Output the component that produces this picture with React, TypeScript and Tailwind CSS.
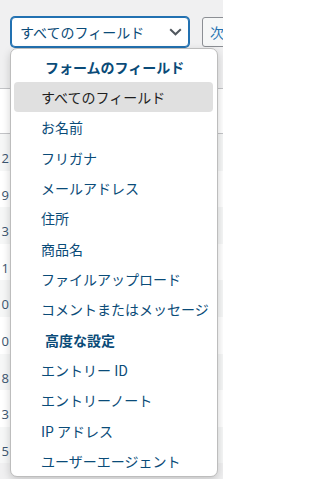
import React from "react";

const jp = { fontFamily: '"Noto Sans CJK JP", "Noto Sans", sans-serif' };

type Row = { label: string; kind: "header" | "item" | "selected" };

const rows: Row[] = [
  { label: "フォームのフィールド", kind: "header" },
  { label: "すべてのフィールド", kind: "selected" },
  { label: "お名前", kind: "item" },
  { label: "フリガナ", kind: "item" },
  { label: "メールアドレス", kind: "item" },
  { label: "住所", kind: "item" },
  { label: "商品名", kind: "item" },
  { label: "ファイルアップロード", kind: "item" },
  { label: "コメントまたはメッセージ", kind: "item" },
  { label: "高度な設定", kind: "header" },
  { label: "エントリー ID", kind: "item" },
  { label: "エントリーノート", kind: "item" },
  { label: "IP アドレス", kind: "item" },
  { label: "ユーザーエージェント", kind: "item" },
];

const tableRows = ["2", "9", "3", "1", "0", "0", "8", "3", "5"];

export default function App() {
  return (
    <div className="relative w-[223px] h-[479px] overflow-hidden bg-[#f0f0f1]" style={jp}>
      {/* top controls */}
      <div className="flex items-start gap-[13px] pt-[17px] pl-[11px] h-[88px]">
        <div className="shrink-0 w-[178px] h-[30px] rounded-[4px] border border-[#2271b1] shadow-[0_0_0_1px_#2271b1] bg-white flex items-center justify-between pl-[8px] pr-[6px]">
          <span className="text-[14px] leading-[20px] text-[#0a4b78] whitespace-nowrap">すべてのフィールド</span>
          <svg width="13" height="8" viewBox="0 0 13 8" className="shrink-0">
            <polyline points="1.2,1.2 6.5,6.3 11.8,1.2" fill="none" stroke="#50575e" strokeWidth="2" />
          </svg>
        </div>
        <div className="shrink-0 w-[40px] h-[30px] rounded-[3px] border border-[#8c8f94] bg-[#f6f7f7] flex items-center pl-[7px]">
          <span className="text-[14px] leading-[20px] text-[#2271b1]">次</span>
        </div>
      </div>

      {/* table behind */}
      <div className="border-t border-[#c3c4c7] bg-white">
        <div className="h-[45px] border-b border-[#c3c4c7] bg-white" />
        {tableRows.map((n, i) => (
          <div
            key={i}
            className={`h-[36.6px] flex ${i % 2 === 0 ? "bg-[#f6f7f7]" : "bg-white"}`}
          >
            <div className="w-[9px] text-right pt-[10px]">
              <span
                className="text-[13px] leading-[20px] text-[#3c5670]"
                style={{ fontFamily: '"Open Sans", "Noto Sans", sans-serif' }}
              >
                {n}
              </span>
            </div>
          </div>
        ))}
      </div>

      {/* dropdown popup */}
      <div className="absolute left-[10px] top-[48px] w-[208px] h-[429px] rounded-[7px] border border-[#bdbdbd] bg-white shadow-[0_3px_8px_rgba(0,0,0,0.18)] pt-[2.5px] pl-[3px] pr-[4px] overflow-hidden">
        {rows.map((r, i) => (
          <div
            key={i}
            className={`h-[30.33px] flex items-center rounded-[4px] whitespace-nowrap text-[14px] leading-[20px] ${
              r.kind === "header"
                ? "pl-[31px] font-bold text-[#0a4b78]"
                : r.kind === "selected"
                ? "pl-[27px] bg-[#e0e0e0] text-[#1e1e1e]"
                : "pl-[27px] text-[#0a4b78]"
            }`}
          >
            {r.label}
          </div>
        ))}
      </div>
    </div>
  );
}
